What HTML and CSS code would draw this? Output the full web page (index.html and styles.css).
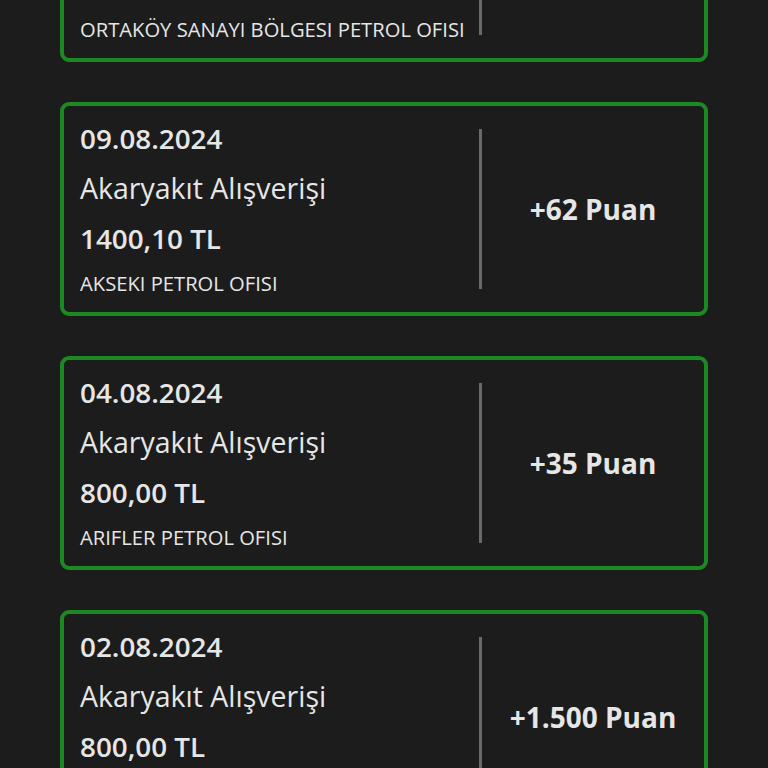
FILE: index.html
```html
<!DOCTYPE html>
<html lang="tr">
<head>
<meta charset="utf-8">
<title>Puan Geçmişi</title>
<link rel="stylesheet" href="styles.css">
</head>
<body>
<main class="list">
  <section class="card">
    <div class="info">
      <div class="date">12.08.2024</div>
      <div class="title">Akaryakıt Alışverişi</div>
      <div class="amount">950 TL</div>
      <div class="store">ORTAKÖY SANAYI BÖLGESI PETROL OFISI</div>
    </div>
    <div class="divider"></div>
    <div class="points">+42 Puan</div>
  </section>
  <section class="card">
    <div class="info">
      <div class="date">09.08.2024</div>
      <div class="title">Akaryakıt Alışverişi</div>
      <div class="amount">1400,10 TL</div>
      <div class="store">AKSEKI PETROL OFISI</div>
    </div>
    <div class="divider"></div>
    <div class="points">+62 Puan</div>
  </section>
  <section class="card">
    <div class="info">
      <div class="date">04.08.2024</div>
      <div class="title">Akaryakıt Alışverişi</div>
      <div class="amount">800,00 TL</div>
      <div class="store">ARIFLER PETROL OFISI</div>
    </div>
    <div class="divider"></div>
    <div class="points">+35 Puan</div>
  </section>
  <section class="card">
    <div class="info">
      <div class="date">02.08.2024</div>
      <div class="title">Akaryakıt Alışverişi</div>
      <div class="amount">800,00 TL</div>
      <div class="store">ARIFLER PETROL OFISI</div>
    </div>
    <div class="divider"></div>
    <div class="points">+1.500 Puan</div>
  </section>
</main>
</body>
</html>
```

FILE: styles.css
```css
html, body {
  margin: 0;
  padding: 0;
  background: #1c1c1c;
  height: 768px;
  overflow: hidden;
}
body {
  font-family: "Open Sans", "Noto Sans", sans-serif;
  color: #e6e6e6;
}
.list {
  display: flex;
  flex-direction: column;
  gap: 40px;
  width: 648px;
  margin: -152px 0 0 60px;
}
.card {
  display: flex;
  height: 214px;
  box-sizing: border-box;
  border: 4px solid #1c8a22;
  border-radius: 9px;
  background: #1c1c1c;
}
.info {
  width: 415px;
  box-sizing: border-box;
  padding: 7px 0 0 16px;
}
.date, .amount {
  font-size: 27.8px;
  line-height: 50px;
  font-weight: 600;
  white-space: nowrap;
}
.title {
  font-size: 28.5px;
  line-height: 50px;
  font-weight: 400;
  white-space: nowrap;
}
.store {
  font-size: 20.2px;
  line-height: 40px;
  white-space: nowrap;
}
.divider {
  width: 3px;
  margin: 23px 0;
  background: #6a6a6a;
}
.points {
  flex: 1;
  display: flex;
  align-items: center;
  justify-content: center;
  font-size: 28px;
  font-weight: 700;
}
```
